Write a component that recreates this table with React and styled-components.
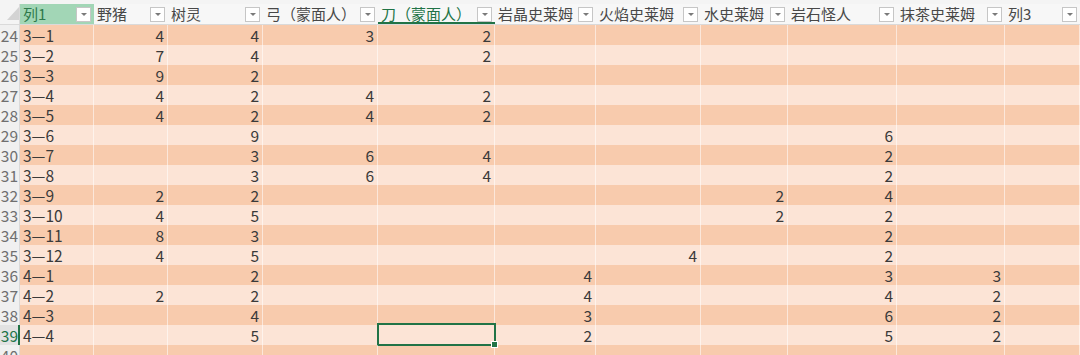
import React from "react";
import styled, { createGlobalStyle, css } from "styled-components";

const Global = createGlobalStyle`
  html, body { margin: 0; padding: 0; background: #ffffff; }
  body { font-family: "Noto Sans CJK SC", "Liberation Sans", sans-serif; }
`;

const COLS = [74, 74, 95, 115, 117, 101, 105, 87, 109, 108, 75];
const TEMPLATE = `20px ${COLS.map((w) => `${w}px`).join(" ")}`;

const HEADERS = [
  "列1",
  "野猪",
  "树灵",
  "弓（蒙面人）",
  "刀（蒙面人）",
  "岩晶史莱姆",
  "火焰史莱姆",
  "水史莱姆",
  "岩石怪人",
  "抹茶史莱姆",
  "列3",
];

const ROWS = [
  [24, "3—1", 4, 4, 3, 2],
  [25, "3—2", 7, 4, "", 2],
  [26, "3—3", 9, 2],
  [27, "3—4", 4, 2, 4, 2],
  [28, "3—5", 4, 2, 4, 2],
  [29, "3—6", "", 9, "", "", "", "", "", 6],
  [30, "3—7", "", 3, 6, 4, "", "", "", 2],
  [31, "3—8", "", 3, 6, 4, "", "", "", 2],
  [32, "3—9", 2, 2, "", "", "", "", 2, 4],
  [33, "3—10", 4, 5, "", "", "", "", 2, 2],
  [34, "3—11", 8, 3, "", "", "", "", "", 2],
  [35, "3—12", 4, 5, "", "", "", 4, "", 2],
  [36, "4—1", "", 2, "", "", 4, "", "", 3, 3],
  [37, "4—2", 2, 2, "", "", 4, "", "", 4, 2],
  [38, "4—3", "", 4, "", "", 3, "", "", 6, 2],
  [39, "4—4", "", 5, "", "", 2, "", "", 5, 2],
  [40, ""],
];

const ACTIVE_ROW = 39;
const ACTIVE_COL = 4;

const Sheet = styled.div`
  width: 1080px;
  height: 355px;
  overflow: hidden;
  display: flex;
  flex-direction: column;
  background: #ffffff;
`;

const TopStrip = styled.div`
  height: 4px;
  flex: none;
  background: #f4f4f4;
`;

const HeaderRow = styled.div`
  display: grid;
  grid-template-columns: ${TEMPLATE};
  height: 20px;
  flex: none;
  background: #f7f7f7;
  border-bottom: 1px solid #dadada;
`;

const Corner = styled.div`
  background: #f4f4f4;
  border-right: 1px solid #dadada;
  svg { display: block; margin: 3px 0 0 7px; }
`;

const HeaderCell = styled.div`
  display: flex;
  align-items: center;
  justify-content: space-between;
  padding: 0 3px 0 3px;
  overflow: hidden;
  font-size: 15px;
  line-height: 20px;
  color: #484848;
  white-space: nowrap;
  box-sizing: border-box;
  ${(p) =>
    p.$green &&
    css`
      background: #a2d6b6;
      color: #2f7a4c;
    `}
  ${(p) =>
    p.$active &&
    css`
      color: #217346;
      box-shadow: inset 0 -2px 0 #217346;
    `}
`;

const HeaderLabel = styled.span`
  overflow: hidden;
`;

const FilterButton = styled.span`
  flex: none;
  width: 13px;
  height: 13px;
  margin-left: 2px;
  background: #ffffff;
  border: 1px solid #c6c6c6;
  display: flex;
  align-items: center;
  justify-content: center;
  &::before {
    content: "";
    width: 0;
    height: 0;
    border-left: 3px solid transparent;
    border-right: 3px solid transparent;
    border-top: 3px solid #7a7a7a;
  }
`;

const DataRow = styled.div`
  display: grid;
  grid-template-columns: ${TEMPLATE};
  height: 20px;
  flex: none;
  background: ${(p) => (p.$dark ? "#f8cbad" : "#fce4d6")};
`;

const RowNumber = styled.div`
  background: ${(p) => (p.$active ? "#e2e2e2" : "#f0f0f0")};
  color: ${(p) => (p.$active ? "#217346" : "#6f6f6f")};
  box-shadow: ${(p) => (p.$active ? "inset -2px 0 0 #217346" : "inset -1px 0 0 #dadada")};
  font-size: 15.5px;
  line-height: 20px;
  display: flex;
  justify-content: flex-end;
  padding-right: 2px;
  overflow: hidden;
  white-space: nowrap;
`;

const Cell = styled.div`
  position: relative;
  font-size: 15.5px;
  line-height: 20px;
  color: #3a3a3a;
  padding: 0 4px 0 3px;
  text-align: ${(p) => (p.$num ? "right" : "left")};
  box-shadow: inset -1px 0 0 rgba(255, 255, 255, 0.55);
  white-space: nowrap;
  ${(p) =>
    p.$selected &&
    css`
      &::after {
        content: "";
        position: absolute;
        left: -1px;
        top: -2px;
        right: -1px;
        bottom: -1px;
        border: 2px solid #217346;
        box-sizing: border-box;
      }
      &::before {
        content: "";
        position: absolute;
        right: -3px;
        bottom: -3px;
        width: 5px;
        height: 5px;
        background: #217346;
        border: 1px solid #ffffff;
        z-index: 2;
        box-sizing: content-box;
      }
    `}
`;

export default function App() {
  return (
    <>
      <Global />
      <Sheet>
        <TopStrip />
        <HeaderRow>
          <Corner>
            <svg width="12" height="13" viewBox="0 0 12 13">
              <polygon points="12,0 12,13 0,13" fill="#d3d3d3" />
            </svg>
          </Corner>
          {HEADERS.map((h, i) => (
            <HeaderCell key={h} $green={i === 0} $active={i === ACTIVE_COL}>
              <HeaderLabel>{h}</HeaderLabel>
              <FilterButton />
            </HeaderCell>
          ))}
        </HeaderRow>
        {ROWS.map((r, ri) => {
          const [num, label, ...vals] = r;
          return (
            <DataRow key={num} $dark={ri % 2 === 0}>
              <RowNumber $active={num === ACTIVE_ROW}>{num}</RowNumber>
              <Cell>{label}</Cell>
              {COLS.slice(1).map((_, ci) => (
                <Cell
                  key={ci}
                  $num
                  $selected={num === ACTIVE_ROW && ci + 1 === ACTIVE_COL}
                >
                  {vals[ci] ?? ""}
                </Cell>
              ))}
            </DataRow>
          );
        })}
      </Sheet>
    </>
  );
}
